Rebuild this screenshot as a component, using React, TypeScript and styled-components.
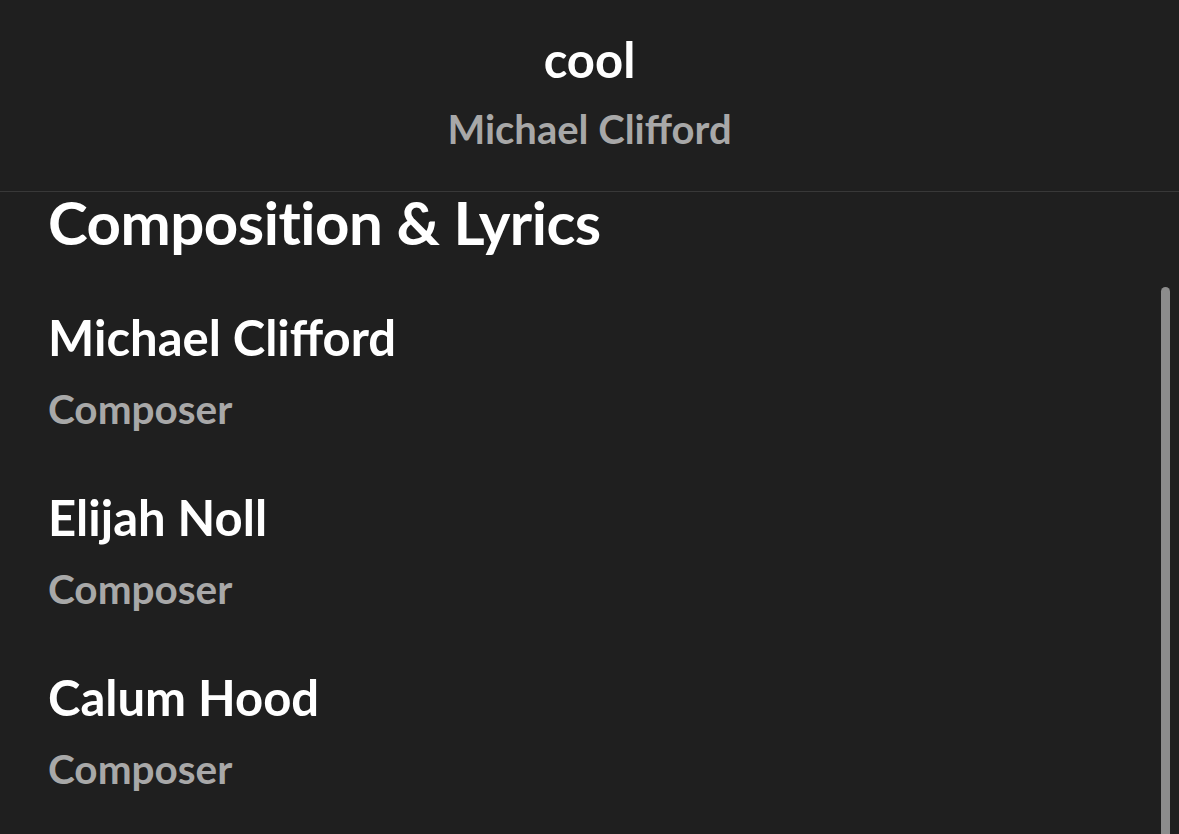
import React from 'react'
import styled, { createGlobalStyle } from 'styled-components'

const GlobalStyle = createGlobalStyle`
    html, body {
        margin: 0;
        padding: 0;
        background: #1f1f1f;
        font-family: Lato, "Noto Sans", sans-serif;
        -webkit-font-smoothing: antialiased;
    }
`

const Page = styled.div`
    width: 1179px;
    height: 834px;
    overflow: hidden;
    background: #1f1f1f;
    display: flex;
    flex-direction: column;
    position: relative;
`

const Header = styled.header`
    height: 191px;
    flex-shrink: 0;
    border-bottom: 1px solid #383838;
    display: flex;
    flex-direction: column;
    align-items: center;
    box-sizing: content-box;
`

const Title = styled.h1`
    margin: 29px 0 0;
    font-size: 49px;
    line-height: 60px;
    font-weight: 700;
    color: #ffffff;
`

const Subtitle = styled.div`
    margin-top: 10px;
    font-size: 40px;
    line-height: 60px;
    font-weight: 700;
    color: #a8a8a8;
`

const Content = styled.main`
    flex: 1;
    padding: 0 48px;
    display: flex;
    flex-direction: column;
`

const SectionTitle = styled.h2`
    margin: 0;
    font-size: 60px;
    line-height: 60px;
    font-weight: 700;
    color: #ffffff;
    letter-spacing: -0.5px;
`

const CreditList = styled.ul`
    list-style: none;
    margin: 60px 0 0;
    padding: 0;
    display: flex;
    flex-direction: column;
    gap: 63px;
`

const Credit = styled.li`
    display: flex;
    flex-direction: column;
    gap: 27px;
`

const Name = styled.div`
    font-size: 49px;
    line-height: 50px;
    font-weight: 700;
    color: #ffffff;
`

const Role = styled.div`
    font-size: 40.5px;
    line-height: 40px;
    font-weight: 700;
    color: #a8a8a8;
`

const ScrollThumb = styled.div`
    position: absolute;
    right: 9px;
    top: 287px;
    width: 9px;
    height: 600px;
    border-radius: 5px;
    background: #8c8c8c;
`

const credits = [
    { name: 'Michael Clifford', role: 'Composer' },
    { name: 'Elijah Noll', role: 'Composer' },
    { name: 'Calum Hood', role: 'Composer' },
]

export default function App() {
    return (
        <>
            <GlobalStyle />
            <Page>
                <Header>
                    <Title>cool</Title>
                    <Subtitle>Michael Clifford</Subtitle>
                </Header>
                <Content>
                    <SectionTitle>Composition &amp; Lyrics</SectionTitle>
                    <CreditList>
                        {credits.map((c) => (
                            <Credit key={c.name}>
                                <Name>{c.name}</Name>
                                <Role>{c.role}</Role>
                            </Credit>
                        ))}
                    </CreditList>
                </Content>
                <ScrollThumb />
            </Page>
        </>
    )
}
